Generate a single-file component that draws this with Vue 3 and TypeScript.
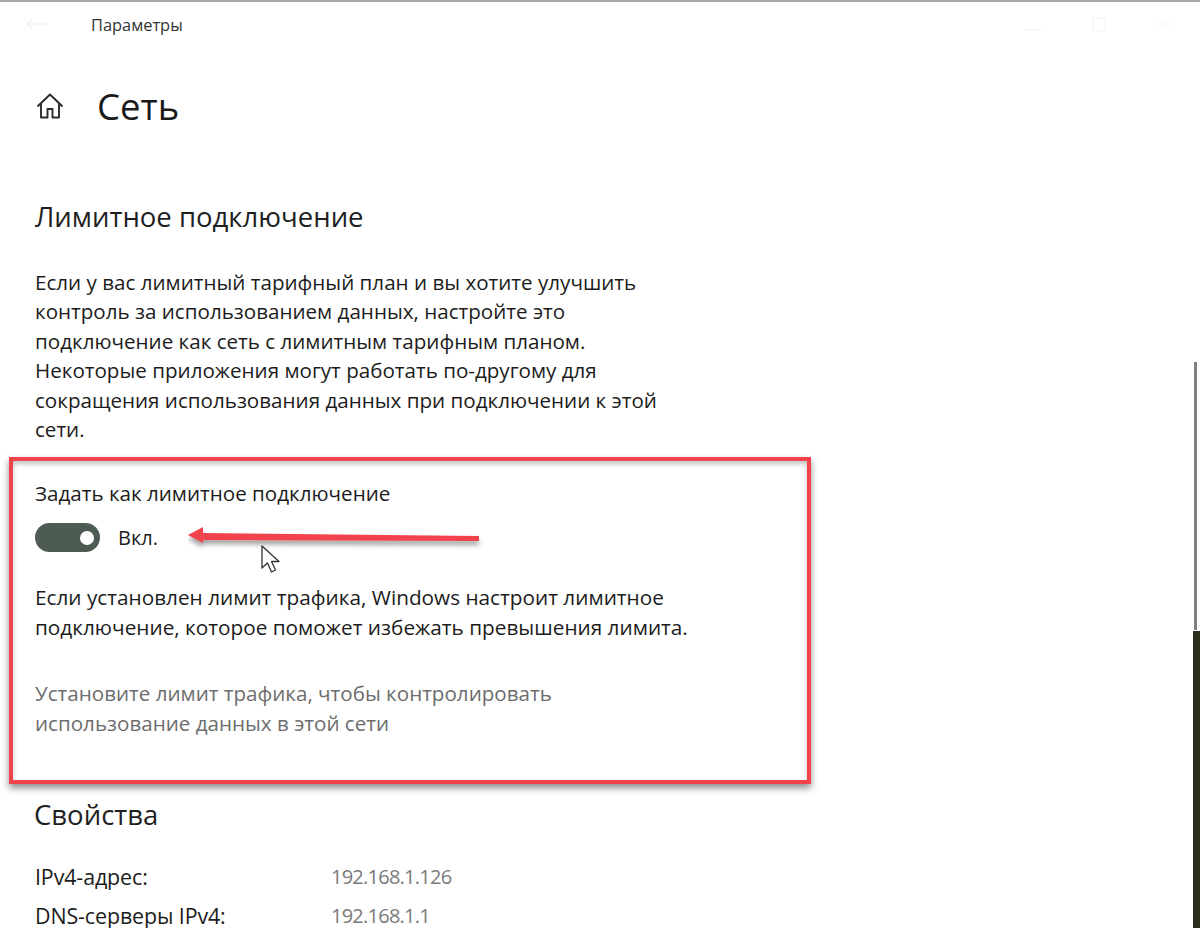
<script setup lang="ts">
const paragraphs: string[] = [
  'Если у вас лимитный тарифный план и вы хотите улучшить',
  'контроль за использованием данных, настройте это',
  'подключение как сеть с лимитным тарифным планом.',
  'Некоторые приложения могут работать по-другому для',
  'сокращения использования данных при подключении к этой',
  'сети.',
]
const hint: string[] = [
  'Если установлен лимит трафика, Windows настроит лимитное',
  'подключение, которое поможет избежать превышения лимита.',
]
const link: string[] = [
  'Установите лимит трафика, чтобы контролировать',
  'использование данных в этой сети',
]
const props = [
  { k: 'IPv4-адрес:', v: '192.168.1.126' },
  { k: 'DNS-серверы IPv4:', v: '192.168.1.1' },
]
</script>

<template>
  <div class="window">
    <div class="topline"></div>
    <header class="titlebar">
      <svg class="back" width="24" height="16" viewBox="0 0 24 16" fill="none" stroke="#f1f1f1" stroke-width="1.5">
        <path d="M23 8H3M9 2L3 8l6 6" />
      </svg>
      <span class="apptitle">Параметры</span>
      <div class="winctl">
        <svg width="16" height="16" viewBox="0 0 16 16" fill="none" stroke="#eeeeee"><path d="M0 14h16" /></svg>
        <svg width="16" height="16" viewBox="0 0 16 16" fill="none" stroke="#f2f2f2"><path d="M2 2h12v13H2z" /></svg>
        <svg width="16" height="16" viewBox="0 0 16 16" fill="none" stroke="#f4f4f4"><path d="M2 2l12 12M14 2L2 14" /></svg>
      </div>
    </header>

    <div class="pagehead">
      <svg class="home" width="28" height="28" viewBox="0 0 28 28" fill="none" stroke="#2b2b2b" stroke-width="1.9" stroke-linejoin="round">
        <path d="M1.5 14.5L14 2.5l12.5 12" />
        <path d="M5 11.5V25.5h6.5V17h5v8.5H23V11.5" />
      </svg>
      <h1 class="pagetitle">Сеть</h1>
    </div>

    <h2 class="section first">Лимитное подключение</h2>
    <p class="body intro"><span v-for="l in paragraphs" :key="l" class="line">{{ l }}</span></p>

    <section class="redbox">
      <div class="label">Задать как лимитное подключение</div>
      <div class="toggle-row">
        <span class="toggle"><span class="knob"></span></span>
        <span class="toggle-text">Вкл.</span>
      </div>
      <p class="body hint"><span v-for="l in hint" :key="l" class="line">{{ l }}</span></p>
      <p class="body link"><span v-for="l in link" :key="l" class="line">{{ l }}</span></p>
    </section>

    <h2 class="section props-title">Свойства</h2>
    <dl class="props">
      <div v-for="p in props" :key="p.k" class="prop">
        <dt>{{ p.k }}</dt>
        <dd>{{ p.v }}</dd>
      </div>
    </dl>

    <svg class="arrow" width="310" height="40" viewBox="0 0 310 40">
      <defs>
        <filter id="arrowShadow" x="-5%" y="-60%" width="110%" height="240%">
          <feDropShadow dx="0" dy="4" stdDeviation="2.5" flood-color="#000" flood-opacity="0.38" />
        </filter>
      </defs>
      <path d="M0 15L15 7V13L291 16v5L15 20v3z" fill="#f2434c" filter="url(#arrowShadow)" />
    </svg>

    <svg class="cursor" width="22" height="32" viewBox="0 0 22 32" fill="#fff" stroke="#333" stroke-width="1.3" stroke-linejoin="round">
      <path d="M2 2v22l5.5-5 4 9 4-2-4-8.5h7.5z" />
    </svg>

    <div class="scrollthumb"></div>
    <div class="desktop-edge"></div>
  </div>
</template>

<style>
html, body { margin: 0; padding: 0; background: #fff; }
</style>

<style scoped>
.window {
  position: relative;
  width: 1200px;
  height: 928px;
  overflow: hidden;
  background: #fff;
  font-family: "Open Sans", "Noto Sans", sans-serif;
  color: #1c1c1c;
}
.topline { height: 2px; background: #a6a6a6; }
.titlebar {
  display: flex;
  align-items: center;
  height: 44px;
  padding: 0 0 0 24px;
}
.back { flex: none; }
.apptitle {
  margin-left: 43px;
  font-size: 16.4px;
  color: #333;
}
.winctl {
  margin-left: auto;
  display: flex;
  gap: 50px;
  padding-right: 27px;
}
.pagehead {
  display: flex;
  align-items: center;
  height: 76px;
  margin-top: 22px;
  padding-left: 36px;
  gap: 33px;
}
.home { flex: none; }
.pagetitle {
  margin: 0;
  font-size: 36.5px;
  font-weight: 400;
  line-height: 44px;
  color: #1a1a1a;
}
.section {
  margin: 0;
  font-weight: 400;
  font-size: 27.5px;
  color: #1f1f1f;
}
.section.first {
  margin-top: 55px;
  padding-left: 35px;
  line-height: 36px;
}
.body { margin: 0; font-size: 20.6px; line-height: 29.4px; }
.line { display: block; white-space: nowrap; }
.intro { margin-top: 33px; padding-left: 35px; }
.redbox {
  box-sizing: border-box;
  width: 802px;
  height: 327px;
  margin: 13px 0 0 9px;
  padding: 19px 0 0 22px;
  border: 4px solid #f2434c;
  box-shadow: 0 4px 7px rgba(0, 0, 0, 0.45), inset 0 3px 5px rgba(0, 0, 0, 0.24);
}
.label { font-size: 20.6px; line-height: 26px; }
.toggle-row {
  display: flex;
  align-items: center;
  gap: 18px;
  margin-top: 17px;
  height: 29px;
}
.toggle {
  display: flex;
  align-items: center;
  justify-content: flex-end;
  box-sizing: border-box;
  width: 65px;
  height: 29px;
  padding-right: 6px;
  border-radius: 15px;
  background: #4d5b53;
}
.knob { width: 14px; height: 14px; border-radius: 50%; background: #fff; }
.toggle-text { font-size: 20px; }
.hint { margin-top: 31px; font-size: 20.75px; }
.link { margin-top: 37px; color: #6d6d6d; }
.props-title {
  margin-top: 13px;
  padding-left: 34px;
  line-height: 36px;
}
.props { margin: 24px 0 0; padding-left: 35px; }
.prop {
  display: flex;
  height: 39px;
  align-items: center;
  font-size: 21.4px;
  line-height: 22px;
}
.prop dt { width: 296px; letter-spacing: -0.1px; }
.prop dd { margin: 0; color: #7a7a7a; font-size: 20px; letter-spacing: -0.75px; }
.arrow { position: absolute; left: 188px; top: 520px; }
.cursor { position: absolute; left: 260px; top: 544px; }
.scrollthumb {
  position: absolute;
  left: 1194px;
  top: 362px;
  width: 3px;
  height: 268px;
  background: #808080;
}
.desktop-edge {
  position: absolute;
  left: 1193px;
  top: 631px;
  width: 7px;
  height: 297px;
  background: #2a2e1c;
}
</style>
